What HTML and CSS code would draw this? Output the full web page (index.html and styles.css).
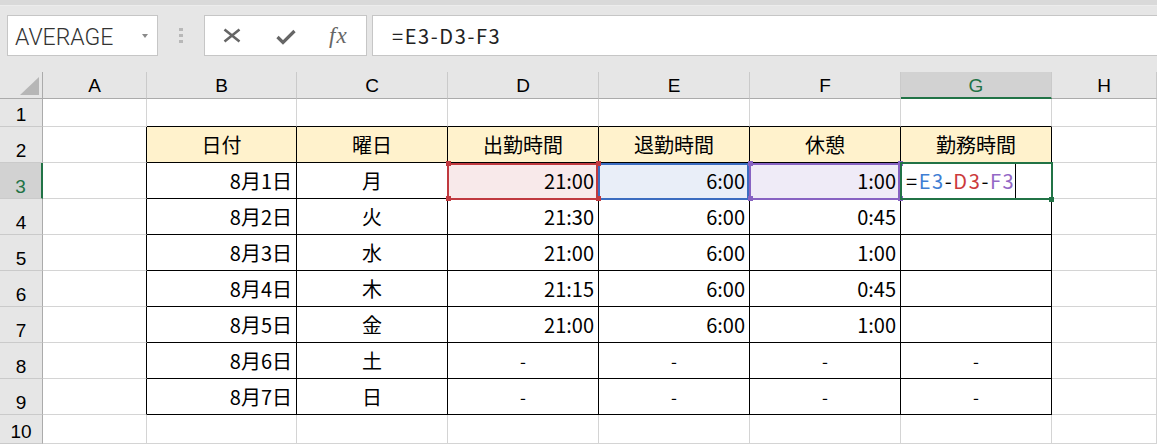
FILE: index.html
```html
<!DOCTYPE html>
<html lang="ja">
<head>
    <meta charset="UTF-8">
    <title>勤務時間</title>
    <link rel="stylesheet" href="styles.css">
</head>
<body>
    <div class="top-strip"></div>

    <div class="formula-row">
        <div class="name-box">
            <span class="name">AVERAGE</span>
            <span class="drop"></span>
        </div>
        <div class="grip"><i></i><i></i><i></i></div>
        <div class="fx-buttons">
            <svg class="btn-x" width="18" height="15" viewBox="0 0 18 15">
                <path d="M1.5 1.5 L16.5 13.5 M16.5 1.5 L1.5 13.5" stroke="#666" stroke-width="2.6" fill="none"/>
            </svg>
            <svg class="btn-ok" width="20" height="16" viewBox="0 0 20 16">
                <path d="M1.5 8 L7 13.5 L18.5 2" stroke="#666" stroke-width="3.2" fill="none"/>
            </svg>
            <span class="fx">fx</span>
        </div>
        <div class="formula-input">=E3-D3-F3</div>
    </div>

    <div class="sheet">
        <!-- column headers -->
        <div class="corner"></div>
        <div class="hdr">A</div>
        <div class="hdr">B</div>
        <div class="hdr">C</div>
        <div class="hdr">D</div>
        <div class="hdr">E</div>
        <div class="hdr">F</div>
        <div class="hdr sel">G</div>
        <div class="hdr">H</div>

        <!-- row 1 -->
        <div class="rh">1</div>
        <div class="cell"></div>
        <div class="cell above"></div>
        <div class="cell above"></div>
        <div class="cell above"></div>
        <div class="cell above"></div>
        <div class="cell above"></div>
        <div class="cell above"></div>
        <div class="cell"></div>

        <!-- row 2 -->
        <div class="rh">2</div>
        <div class="cell before"></div>
        <div class="cell t th">日付</div>
        <div class="cell t th">曜日</div>
        <div class="cell t th">出勤時間</div>
        <div class="cell t th">退勤時間</div>
        <div class="cell t th">休憩</div>
        <div class="cell t th">勤務時間</div>
        <div class="cell"></div>

        <!-- row 3 -->
        <div class="rh sel">3</div>
        <div class="cell before"></div>
        <div class="cell t r">8月1日</div>
        <div class="cell t c">月</div>
        <div class="cell t r fill-d">21:00
            <span class="ref ref-red"></span>
            <span class="hd tl red"></span><span class="hd tr red"></span>
            <span class="hd bl red"></span><span class="hd br red"></span>
        </div>
        <div class="cell t r fill-e">6:00
            <span class="ref ref-blue"></span>
        </div>
        <div class="cell t r fill-f">1:00
            <span class="ref ref-purple"></span>
            <span class="hd tl purple"></span><span class="hd tr purple"></span>
            <span class="hd bl purple"></span><span class="hd br purple"></span>
        </div>
        <div class="cell t active">
            <span class="edit">=<span class="e">E3</span>-<span class="d">D3</span>-<span class="f">F3</span></span><span class="caret"></span>
            <span class="active-box"></span>
            <span class="fill-handle"></span>
        </div>
        <div class="cell"></div>

        <!-- row 4 -->
        <div class="rh">4</div>
        <div class="cell before"></div>
        <div class="cell t r">8月2日</div>
        <div class="cell t c">火</div>
        <div class="cell t r">21:30</div>
        <div class="cell t r">6:00</div>
        <div class="cell t r">0:45</div>
        <div class="cell t"></div>
        <div class="cell"></div>

        <!-- row 5 -->
        <div class="rh">5</div>
        <div class="cell before"></div>
        <div class="cell t r">8月3日</div>
        <div class="cell t c">水</div>
        <div class="cell t r">21:00</div>
        <div class="cell t r">6:00</div>
        <div class="cell t r">1:00</div>
        <div class="cell t"></div>
        <div class="cell"></div>

        <!-- row 6 -->
        <div class="rh">6</div>
        <div class="cell before"></div>
        <div class="cell t r">8月4日</div>
        <div class="cell t c">木</div>
        <div class="cell t r">21:15</div>
        <div class="cell t r">6:00</div>
        <div class="cell t r">0:45</div>
        <div class="cell t"></div>
        <div class="cell"></div>

        <!-- row 7 -->
        <div class="rh">7</div>
        <div class="cell before"></div>
        <div class="cell t r">8月5日</div>
        <div class="cell t c">金</div>
        <div class="cell t r">21:00</div>
        <div class="cell t r">6:00</div>
        <div class="cell t r">1:00</div>
        <div class="cell t"></div>
        <div class="cell"></div>

        <!-- row 8 -->
        <div class="rh">8</div>
        <div class="cell before"></div>
        <div class="cell t r">8月6日</div>
        <div class="cell t c">土</div>
        <div class="cell t c dash">-</div>
        <div class="cell t c dash">-</div>
        <div class="cell t c dash">-</div>
        <div class="cell t c dash">-</div>
        <div class="cell"></div>

        <!-- row 9 -->
        <div class="rh">9</div>
        <div class="cell before"></div>
        <div class="cell t r">8月7日</div>
        <div class="cell t c">日</div>
        <div class="cell t c dash">-</div>
        <div class="cell t c dash">-</div>
        <div class="cell t c dash">-</div>
        <div class="cell t c dash">-</div>
        <div class="cell"></div>

        <!-- row 10 -->
        <div class="rh">10</div>
        <div class="cell"></div>
        <div class="cell"></div>
        <div class="cell"></div>
        <div class="cell"></div>
        <div class="cell"></div>
        <div class="cell"></div>
        <div class="cell"></div>
        <div class="cell"></div>
    </div>
</body>
</html>
```

FILE: styles.css
```css
body {
    margin: 0;
    width: 1157px;
    height: 444px;
    overflow: hidden;
    background: #e6e6e6;
    font-family: "Noto Sans CJK JP", sans-serif;
    color: #000;
}

.top-strip {
    height: 5px;
    background: #d9d9d9;
    border-bottom: 1px solid #ececec;
}

/* formula bar */
.formula-row {
    display: flex;
    align-items: flex-start;
    height: 66px;
    padding: 9px 0 0 7px;
    box-sizing: border-box;
}
.name-box {
    width: 151px;
    height: 41px;
    box-sizing: border-box;
    border: 1px solid #c6c6c6;
    background: #fff;
    display: flex;
    align-items: center;
    padding-left: 7px;
}
.name {
    flex: 1;
    font-family: Roboto, sans-serif;
    font-weight: 300;
    font-size: 23px;
    color: #333;
    padding-top: 3px;
}
.drop {
    width: 0;
    height: 0;
    border-left: 3px solid transparent;
    border-right: 3px solid transparent;
    border-top: 4px solid #8a8a8a;
    margin-right: 9px;
}
.grip {
    width: 46px;
    display: flex;
    flex-direction: column;
    align-items: center;
    gap: 3px;
    padding-top: 13px;
}
.grip i {
    width: 4px;
    height: 3px;
    background: #b8b8b8;
}
.fx-buttons {
    width: 163px;
    height: 41px;
    box-sizing: border-box;
    border: 1px solid #c6c6c6;
    background: #fff;
    display: flex;
    align-items: center;
}
.btn-x {
    margin-left: 18px;
}
.btn-ok {
    margin-left: 35px;
    margin-top: 3px;
}
.fx {
    margin-left: 33px;
    font-family: "Liberation Serif", serif;
    font-style: italic;
    font-size: 23px;
    letter-spacing: 1px;
    color: #666;
}
.formula-input {
    flex: 1;
    margin-left: 5px;
    height: 41px;
    box-sizing: border-box;
    border: 1px solid #c6c6c6;
    border-right: none;
    background: #fff;
    display: flex;
    align-items: center;
    padding-left: 19px;
    font-size: 20px;
    letter-spacing: 1.6px;
    color: #222;
}

/* sheet grid */
.sheet {
    display: grid;
    grid-template-columns: 43px 104px 150px 151px 151px 151px 151px 151px 1fr;
    grid-template-rows: 27px 28px repeat(8, 36px) 29px;
    background: #fff;
}
.corner {
    position: relative;
    background: #e6e6e6;
    border-right: 1px solid #ababab;
    border-bottom: 1px solid #ababab;
}
.corner::after {
    content: "";
    position: absolute;
    right: 3px;
    bottom: 3px;
    border-left: 19px solid transparent;
    border-bottom: 18px solid #b6b6b6;
}
.hdr {
    background: #e6e6e6;
    border-right: 1px solid #cacaca;
    border-bottom: 1px solid #ababab;
    display: flex;
    align-items: center;
    justify-content: center;
    padding-top: 2px;
    font-family: "Liberation Sans", Arial, sans-serif;
    font-size: 19px;
}
.hdr.sel {
    background: #d2d2d2;
    color: #217346;
    border-bottom: 2px solid #217346;
}
.rh {
    background: #e6e6e6;
    border-right: 1px solid #ababab;
    border-bottom: 1px solid #cacaca;
    display: flex;
    align-items: flex-end;
    justify-content: center;
    font-family: "Liberation Sans", Arial, sans-serif;
    font-size: 19px;
}
.rh.sel {
    background: #d2d2d2;
    color: #217346;
    border-right: 2px solid #217346;
}

.cell {
    position: relative;
    box-sizing: border-box;
    border-right: 1px solid #d4d4d4;
    border-bottom: 1px solid #d4d4d4;
    display: flex;
    align-items: center;
    font-size: 20px;
    white-space: nowrap;
}
.cell.above {
    border-bottom-color: #000;
}
.cell.before {
    border-right-color: #000;
}
.cell.t {
    border-right-color: #000;
    border-bottom-color: #000;
}
.th {
    background: #fff2cc;
    justify-content: center;
}
.r {
    justify-content: flex-end;
    padding-right: 4px;
}
.c {
    justify-content: center;
}
.dash {
    font-size: 17px;
}

/* formula reference highlights */
.fill-d { background: #f8e9ea; }
.fill-e { background: #e9eef8; }
.fill-f { background: #efebf7; }

.ref {
    position: absolute;
    top: 0;
    left: -1px;
    right: 0;
    bottom: -2px;
    border: 2px solid;
}
.ref-red { border-color: #c0393f; z-index: 2; }
.ref-blue { border-color: #3b6cc0; z-index: 1; }
.ref-purple { border-color: #8762c2; z-index: 2; }

.hd {
    position: absolute;
    width: 5px;
    height: 5px;
    z-index: 3;
}
.hd.red { background: #c0393f; }
.hd.purple { background: #8762c2; }
.hd.tl { left: -2px; top: -2px; }
.hd.tr { right: -3px; top: -2px; }
.hd.bl { left: -2px; bottom: -3px; }
.hd.br { right: -3px; bottom: -3px; }

.active {
    padding-left: 5px;
    align-items: stretch;
}
.edit {
    display: flex;
    align-items: center;
    letter-spacing: 1.6px;
}
.edit .e { color: #3f7ed4; }
.edit .d { color: #cc3a3c; }
.edit .f { color: #9368c6; }
.caret {
    width: 1px;
    background: #000;
}
.active-box {
    position: absolute;
    top: -1px;
    left: -1px;
    right: -2px;
    bottom: -2px;
    border: 2px solid #217346;
    z-index: 4;
}
.fill-handle {
    position: absolute;
    right: -3px;
    bottom: -4px;
    width: 5px;
    height: 5px;
    background: #217346;
    z-index: 5;
}
```
